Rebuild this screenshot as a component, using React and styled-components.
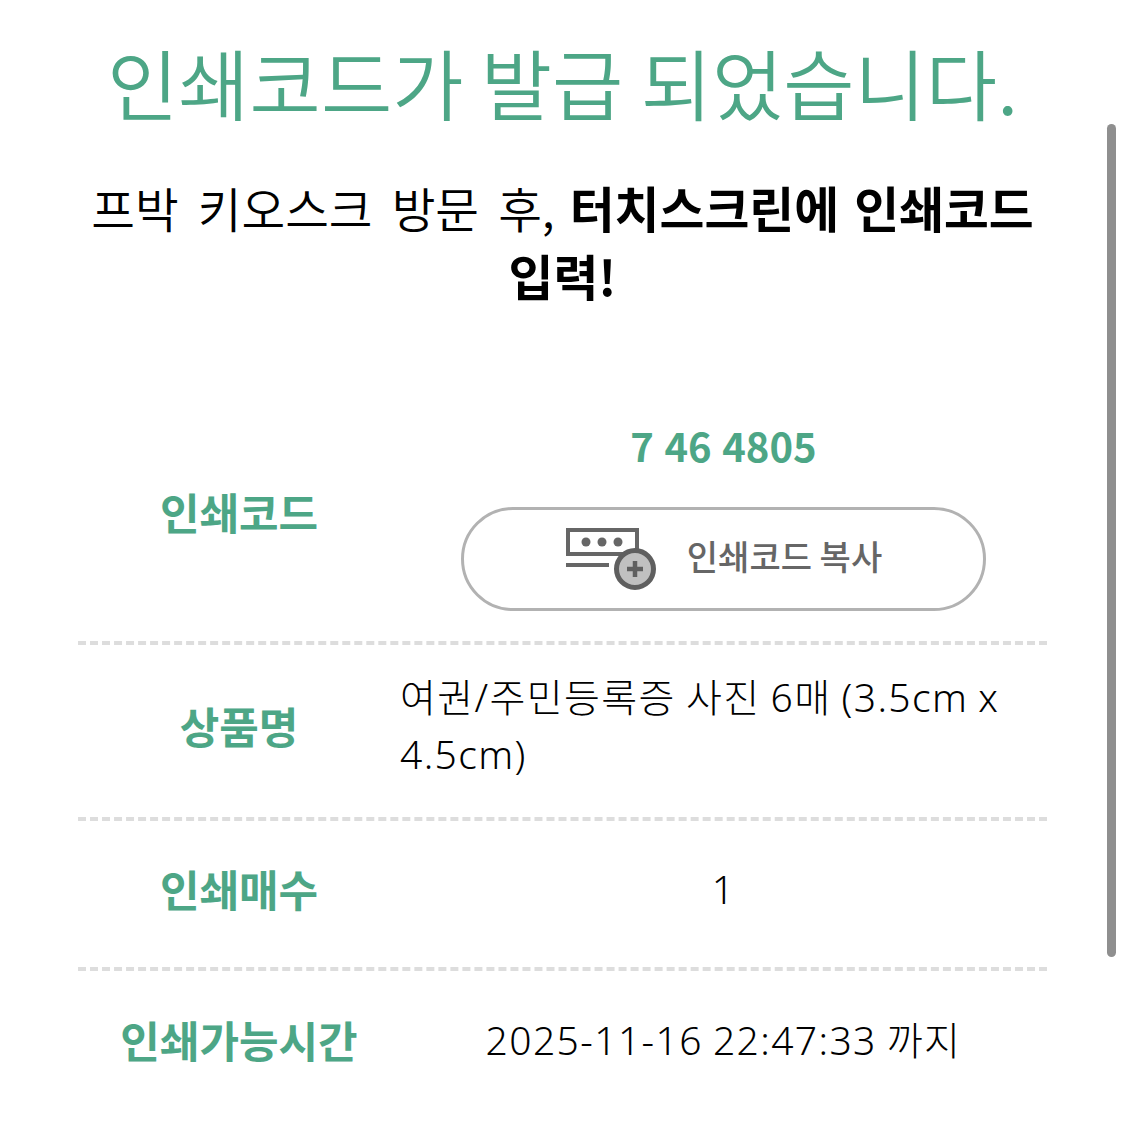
import React from "react";
import styled, { createGlobalStyle } from "styled-components";

const GlobalStyle = createGlobalStyle`
  html, body {
    margin: 0;
    padding: 0;
    background: #ffffff;
  }
  body {
    font-family: "Noto Sans CJK KR", "Noto Sans", sans-serif;
    overflow: hidden;
  }
`;

const Page = styled.div`
  position: relative;
  width: 1125px;
  height: 1138px;
  overflow: hidden;
  background: #ffffff;
`;

const Scrollbar = styled.div`
  position: absolute;
  left: 1107px;
  top: 124px;
  width: 9px;
  height: 833px;
  border-radius: 5px;
  background: #8f8f8f;
`;

const Title = styled.h1`
  margin: 0;
  padding-top: 26px;
  height: 114px;
  text-align: center;
  font-size: 77.5px;
  line-height: 110px;
  font-weight: 350;
  color: #4da686;
  white-space: nowrap;
`;

const Notice = styled.p`
  margin: 34px auto 0;
  width: 970px;
  height: 136px;
  text-align: center;
  font-size: 47.5px;
  line-height: 68px;
  font-weight: 350;
  word-spacing: 8.5px;
  word-break: keep-all;
  color: #000000;
`;

const Strong = styled.b`
  font-size: 48.8px;
  line-height: 1;
  font-weight: 700;
  word-spacing: 4px;
`;

const InfoTable = styled.div`
  margin: 0 0 0 78px;
  width: 969px;
  padding-top: 100px;
`;

const Row = styled.div`
  display: grid;
  grid-template-columns: 322px 647px;
  align-items: center;
  height: ${(p) => p.$height}px;
  padding-bottom: ${(p) => p.$shift}px;
  box-sizing: border-box;
  border-bottom: ${(p) => (p.$last ? "none" : "4px dashed #dddddd")};
`;

const Label = styled.div`
  text-align: center;
  font-size: 43px;
  font-weight: 700;
  color: #4da686;
`;

const Value = styled.div`
  text-align: ${(p) => (p.$left ? "left" : "center")};
  font-family: "Noto Sans", "Noto Sans CJK KR", sans-serif;
  font-size: 39px;
  line-height: 57px;
  font-weight: 300;
  letter-spacing: 1.4px;
  word-spacing: -1.5px;
  color: #000000;
`;

const CodeCell = styled.div`
  display: flex;
  flex-direction: column;
  align-items: center;
  gap: 34px;
  padding-top: 7px;
`;

const Code = styled.div`
  font-size: 40px;
  line-height: 56px;
  font-weight: 700;
  word-spacing: 1.5px;
  color: #4da686;
`;

const CopyButton = styled.button`
  display: flex;
  align-items: center;
  justify-content: center;
  gap: 30px;
  width: 525px;
  height: 104px;
  padding: 0;
  border: 3px solid #b2b2b2;
  border-radius: 52px;
  background: #ffffff;
  font-family: inherit;
  font-size: 34px;
  font-weight: 500;
  color: #666666;
`;

const CopyLabel = styled.span`
  margin-bottom: 8px;
`;

const CopyIcon = () => (
  <svg width="92" height="62" viewBox="0 0 92 62" fill="none">
    <rect x="3" y="2" width="69" height="24" stroke="#666" strokeWidth="4" />
    <circle cx="21" cy="14" r="4.5" fill="#666" />
    <circle cx="37" cy="14" r="4.5" fill="#666" />
    <circle cx="53" cy="14" r="4.5" fill="#666" />
    <rect x="1" y="35" width="43" height="4" fill="#666" />
    <circle cx="70" cy="41" r="18.5" fill="#c0c0c0" stroke="#5f5f5f" strokeWidth="5" />
    <path d="M70 33v16M62 41h16" stroke="#5f5f5f" strokeWidth="4.5" />
  </svg>
);

export default function App() {
  return (
    <Page>
      <GlobalStyle />
      <Title>인쇄코드가 발급 되었습니다.</Title>
      <Notice>
        프박 키오스크 방문 후,<Strong> 터치스크린에 인쇄코드</Strong>{" "}
        <Strong>입력!</Strong>
      </Notice>
      <InfoTable>
        <Row $height={235} $shift={30}>
          <Label>인쇄코드</Label>
          <CodeCell>
            <Code>7 46 4805</Code>
            <CopyButton>
              <CopyIcon />
              <CopyLabel>인쇄코드 복사</CopyLabel>
            </CopyButton>
          </CodeCell>
        </Row>
        <Row $height={176} $shift={12}>
          <Label>상품명</Label>
          <Value $left>여권/주민등록증 사진 6매 (3.5cm x 4.5cm)</Value>
        </Row>
        <Row $height={150} $shift={12}>
          <Label>인쇄매수</Label>
          <Value>1</Value>
        </Row>
        <Row $height={146} $shift={10} $last>
          <Label>인쇄가능시간</Label>
          <Value>2025-11-16 22:47:33 까지</Value>
        </Row>
      </InfoTable>
      <Scrollbar />
    </Page>
  );
}
